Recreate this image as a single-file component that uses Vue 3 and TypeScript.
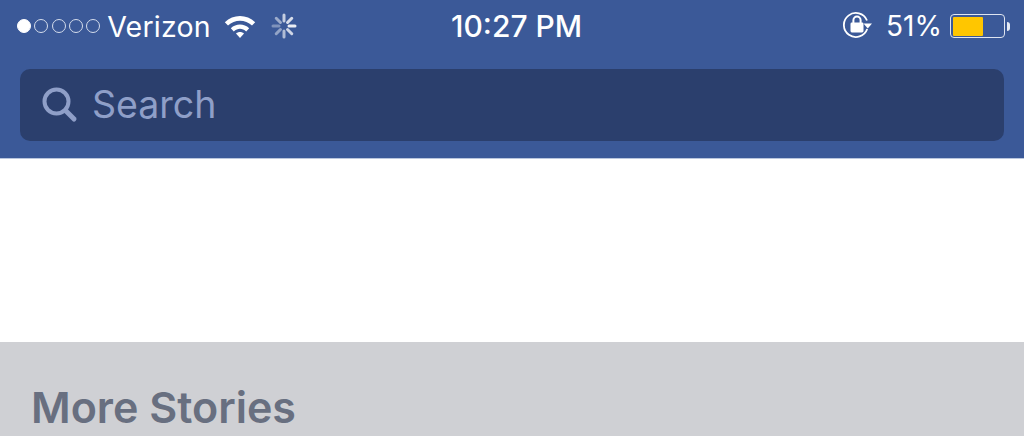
<template>
  <div class="page">
    <header class="top">
      <div class="status">
        <div class="left">
          <div class="dots">
            <span class="dot on"></span>
            <span v-for="n in 4" :key="n" class="dot"></span>
          </div>
          <span class="carrier">Verizon</span>
          <svg class="wifi" width="32" height="24" viewBox="0 0 32 24">
            <path d="M0.8 8.2C9.2 0 22.8 0 31.2 8.2L28 11.6C21.4 5.2 10.6 5.2 4 11.6Z" fill="#fff" />
            <path d="M6.8 14.2C12 9.2 20 9.2 25.2 14.2L22.2 17.4C18.4 14 13.6 14 9.8 17.4Z" fill="#fff" />
            <path d="M12 19.6C14.4 17.6 17.6 17.6 20 19.6L16 24Z" fill="#fff" />
          </svg>
          <svg class="spinner" width="26" height="26" viewBox="0 0 26 26">
            <line
              v-for="s in spokes"
              :key="s.angle"
              x1="13"
              y1="2"
              x2="13"
              y2="8"
              stroke="#fff"
              stroke-width="3"
              stroke-linecap="round"
              :opacity="s.opacity"
              :transform="`rotate(${s.angle} 13 13)`"
            />
          </svg>
        </div>
        <div class="time">10:27 PM</div>
        <div class="right">
          <svg class="lock" width="30" height="28" viewBox="0 0 30 28">
            <path d="M24.2 17A12 12 0 1 1 24 8.5" fill="none" stroke="#fff" stroke-width="1.8" />
            <path d="M20.5 11.5H29L24.8 16.5Z" fill="#fff" />
            <rect x="7.5" y="10.5" width="13" height="10" rx="1.4" fill="#fff" />
            <path d="M10.4 11V8.2a3.6 3.6 0 0 1 7.2 0V11" fill="none" stroke="#fff" stroke-width="2" />
          </svg>
          <span class="pct">51%</span>
          <div class="battery">
            <div class="shell">
              <div class="level" :style="{ width: batteryLevel + '%' }"></div>
            </div>
            <span class="nub"></span>
          </div>
        </div>
      </div>
      <div class="search">
        <svg class="glass" width="38" height="38" viewBox="0 0 38 38">
          <circle cx="16.5" cy="16.5" r="12" fill="none" stroke="#8f9fc8" stroke-width="4" />
          <path d="M25.5 25.5L34 34" stroke="#8f9fc8" stroke-width="5" stroke-linecap="round" />
        </svg>
        <span class="placeholder">Search</span>
      </div>
    </header>
    <div class="blank"></div>
    <section class="more">
      <h2>More Stories</h2>
    </section>
  </div>
</template>

<script setup lang="ts">
const batteryLevel = 60

const spokeOpacities = [0.7, 0.8, 0.9, 0.75, 0.6, 0.45, 0.35, 0.5]
const spokes = spokeOpacities.map((opacity, i) => ({ angle: i * 45, opacity }))
</script>

<style>
html,
body {
  margin: 0;
  background: #fff;
}
</style>

<style scoped>
.page {
  width: 1024px;
  height: 436px;
  overflow: hidden;
  display: flex;
  flex-direction: column;
  font-family: Inter, "Liberation Sans", sans-serif;
}

.top {
  height: 159px;
  box-sizing: border-box;
  background: #3b5998;
  padding: 0 20px;
  border-bottom: 1px solid #b9c6de;
}

.status {
  height: 69px;
  margin: 0 -6px 0 -3px;
  padding-bottom: 17px;
  box-sizing: border-box;
  display: grid;
  grid-template-columns: 434px auto 1fr;
  align-items: center;
  color: #fff;
}

.left {
  display: flex;
  align-items: center;
}

.dots {
  display: flex;
  gap: 3.3px;
}

.dot {
  width: 14px;
  height: 14px;
  box-sizing: border-box;
  border: 1.2px solid #d5ddec;
  border-radius: 50%;
}

.dot.on {
  background: #fff;
  border-color: #fff;
}

.carrier {
  margin-left: 7px;
  font-size: 28.5px;
  letter-spacing: 0.2px;
}

.wifi {
  margin-left: 13px;
}

.spinner {
  margin-left: 15px;
}

.time {
  font-size: 30px;
  font-weight: 500;
}

.right {
  display: flex;
  align-items: center;
  justify-content: flex-end;
}

.pct {
  margin-left: 13px;
  font-size: 28px;
}

.battery {
  margin-left: 8px;
  display: flex;
  align-items: center;
}

.shell {
  width: 55px;
  height: 24px;
  box-sizing: border-box;
  border: 1.5px solid #dfe5f0;
  border-radius: 4px;
  padding: 1.5px;
}

.level {
  height: 100%;
  background: #ffc600;
  border-radius: 1px;
}

.nub {
  width: 3px;
  height: 9px;
  margin-left: 2px;
  background: #e6ebf4;
  border-radius: 0 3px 3px 0;
}

.search {
  height: 72px;
  box-sizing: border-box;
  background: #2b3f6d;
  border-radius: 10px;
  padding: 0 0 2px 20px;
  display: flex;
  align-items: center;
}

.placeholder {
  margin-left: 14px;
  font-size: 37.5px;
  color: #8f9fc8;
}

.blank {
  height: 183px;
  background: #fff;
}

.more {
  flex: 1;
  background: #cfd0d4;
  padding: 40px 0 0 31px;
}

.more h2 {
  margin: 0;
  font-size: 43px;
  line-height: 50px;
  font-weight: 600;
  color: #686f80;
}
</style>
